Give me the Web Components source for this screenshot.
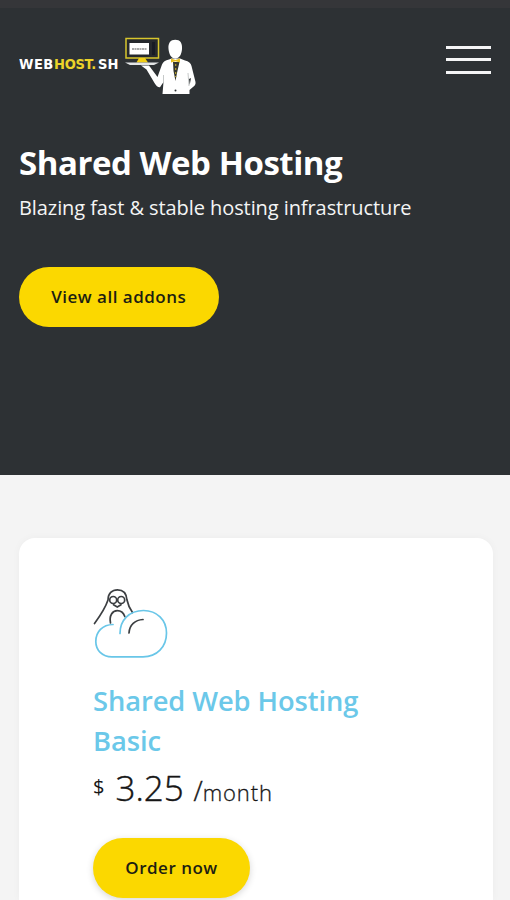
<!DOCTYPE html>
<html lang="en">
<head>
<meta charset="utf-8">
<title>Shared Web Hosting</title>
<style>
    body {
        margin: 0;
        height: 900px;
        overflow: hidden;
        background: #f4f4f4;
        font-family: 'Open Sans', sans-serif;
    }
</style>
</head>
<body>
<host-hero>
    <host-nav slot="nav"></host-nav>
    <span slot="title">Shared Web Hosting</span>
    <span slot="subtitle">Blazing fast &amp; stable hosting infrastructure</span>
    <pill-button slot="action" style="--w: 199.5px">View all addons</pill-button>
</host-hero>
<plan-card>
    <cloud-icon slot="icon"></cloud-icon>
    <span slot="name">Shared Web Hosting Basic</span>
    <plan-price slot="price" currency="$" amount="3.25" period="month"></plan-price>
    <pill-button slot="action" style="--w: 157px; --shadow: 0 2px 7px rgba(0, 0, 0, 0.16)">Order now</pill-button>
</plan-card>

<script>
// attaches an open shadow root with the given markup
class BaseElement extends HTMLElement
{
    constructor()
    {
        super();
        const template = document.createElement('template');
        template.innerHTML = this.constructor.markup;
        this.attachShadow({mode: 'open'}).append(template.content.cloneNode(true));
    }
}

class HostLogo extends BaseElement
{
    static markup = `
<style>
    :host { display: block; width: 178px; height: 60px; }
    svg { display: block; }
    text { font-family: 'DejaVu Sans', sans-serif; font-weight: 700; font-size: 13.1px; letter-spacing: 0.5px; fill: #fff; }
    .accent { fill: #ecd329; letter-spacing: -0.3px; }
    .end { letter-spacing: 0; }
</style>
<svg width="178" height="60" viewBox="19 36 178 60">
    <g transform="translate(0 68.6) scale(1 1.12)">
        <text x="19">WEB</text>
        <text class="accent" x="54">HOST.</text>
        <text class="end" x="98">SH</text>
    </g>
    <!-- monitor -->
    <rect x="126" y="38.5" width="32.5" height="19.5" fill="#25282d" stroke="#d8c62d" stroke-width="1.5"/>
    <rect x="129.5" y="43" width="19.5" height="11.5" fill="#fff"/>
    <path d="M132 49H147" stroke="#555" stroke-width="1.2" stroke-dasharray="2 .5"/>
    <path d="M153.5 42V55" stroke="#171a24" stroke-width="3"/>
    <path d="M139 58H145L148 62.5H136.500Z" fill="#f2ce16"/>
    <path d="M125 62.500H159L154 65H130Z" fill="#e4e6e7"/>
    <!-- waiter -->
    <path d="M168.500 49C168 43 170.500 39.800 175.300 39.800S182.500 43 182 49C181.700 54 179.500 58.500 175.300 58.500S169 54 168.500 49Z" fill="#fff"/>
    <path d="M141 65.500H149L157.500 77L162 64.500Q163.500 60.500 169 59.500L171.500 58.500H180L185 60.500Q190.500 61.500 191.500 66L195.500 82Q196 85 193 87L189.500 90V94H162.500L163.500 82L160 87.200Q157 87.500 154.500 83L146.500 69.500Z" fill="#fff"/>
    <path d="M173 62H179.500L177 73L175.500 81L173.500 71Z" fill="#34362e"/>
    <path d="M171 58.500L175.500 60L180 58.500V62.500L175.500 61.200L171 62.500Z" fill="#e7be20"/>
    <path d="M175.700 64V77" stroke="#b8a12a" stroke-width="1.2" stroke-dasharray="2 2"/>
    <path d="M189 79L191 78L189.700 85Z" fill="#2d3134"/>
    <path d="M163.500 75V83M188 73L189 86" stroke="#aeb1b2" stroke-width=".7"/>
    <circle cx="175.500" cy="90.500" r="1" fill="#2d3134"/>
</svg>`;
}
customElements.define('host-logo', HostLogo);

class MenuToggle extends BaseElement
{
    static markup = `
<style>
    :host { display: flex; flex-direction: column; gap: 9.3px; width: 45px; padding-top: 10px; }
    i { height: 3px; background: #f5f5f6; }
</style>
<i></i><i></i><i></i>`;
}
customElements.define('menu-toggle', MenuToggle);

class HostNav extends BaseElement
{
    static markup = `
<style>
    :host { display: flex; justify-content: space-between; align-items: flex-start; height: 105px; }
</style>
<host-logo></host-logo>
<menu-toggle></menu-toggle>`;
}
customElements.define('host-nav', HostNav);

class PillButton extends BaseElement
{
    static markup = `
<style>
    :host { display: block; }
    button {
        display: block;
        width: var(--w);
        height: 60px;
        padding: 0;
        border: 0;
        border-radius: 30px;
        background: #fbd800;
        color: #1d1e12;
        font: 600 17px/60px 'Open Sans', sans-serif;
        letter-spacing: 0.5px;
        box-shadow: var(--shadow, none);
        white-space: nowrap;
        cursor: pointer;
    }
</style>
<button type="button"><slot></slot></button>`;
}
customElements.define('pill-button', PillButton);

class HostHero extends BaseElement
{
    static markup = `
<style>
    :host {
        display: block;
        box-sizing: border-box;
        height: 474.5px;
        padding: 28px 19px 0;
        border-top: 8px solid #353639;
        background: #2d3134;
        color: #fff;
    }
    h1 { margin: 0; font-size: 33px; line-height: 44px; font-weight: 700; letter-spacing: -0.45px; white-space: nowrap; }
    p { margin: 9px 0 44.500px; font-size: 20px; line-height: 28px; color: #f4f5f5; letter-spacing: -0.08px; white-space: nowrap; }
</style>
<slot name="nav"></slot>
<h1><slot name="title"></slot></h1>
<p><slot name="subtitle"></slot></p>
<slot name="action"></slot>`;
}
customElements.define('host-hero', HostHero);

class CloudIcon extends BaseElement
{
    static markup = `
<style>
    :host { display: block; width: 76px; height: 72px; }
    svg { display: block; fill: none; stroke-linecap: round; stroke-width: 1.7; }
</style>
<svg width="76" height="72" viewBox="93 588 76 72">
    <g stroke="#3c3f42">
        <path d="M94.500 623.500C100 616 105 609 108 600C108 593.500 112 589.800 117.500 589.800S126.500 593.500 127 600C128 605 130 609 132.500 612.500"/>
        <circle cx="113.200" cy="600" r="3.500"/>
        <circle cx="121.200" cy="600" r="3.500"/>
        <path d="M113.500 604.800L117.300 607L121 604.800" />
        <path d="M110.500 623C109 615.500 112.500 610.700 117.300 610.700C121 610.700 123.500 613 124.800 616.500"/>
        <path d="M129 633C129.500 625 135 620 143 619.500"/>
    </g>
    <path stroke="#69c6e8" d="M120 633.500C120 620 129.500 610.500 143.500 610.500C157 610.500 166.500 620 166.500 633C166.500 647 157 656.800 143 656.800H112C102 656.800 95.800 650 95.800 641.500C95.800 631.500 102.500 624.700 113 624.500"/>
</svg>`;
}
customElements.define('cloud-icon', CloudIcon);

class PlanPrice extends BaseElement
{
    static markup = `
<style>
    :host { display: flex; align-items: baseline; height: 50px; line-height: 50px; color: #161616; white-space: nowrap; }
    .currency { position: relative; top: -7px; width: 22.5px; font-size: 20px; }
    .amount { width: 78px; font-size: 35px; font-weight: 300; -webkit-text-stroke: 0.4px; }
    .slash { font-size: 27px; font-weight: 300; -webkit-text-stroke: 0.4px; }
    .period { font-size: 22px; font-weight: 300; letter-spacing: 0.9px; -webkit-text-stroke: 0.3px; }
</style>
<span class="currency"></span><span class="amount"></span><span class="slash">/</span><span class="period"></span>`;

    connectedCallback()
    {
        ['currency', 'amount', 'period'].forEach(name => {
            this.shadowRoot.querySelector('.' + name).textContent = this.getAttribute(name);
        })
    }
}
customElements.define('plan-price', PlanPrice);

class PlanCard extends BaseElement
{
    static markup = `
<style>
    :host {
        display: block;
        box-sizing: border-box;
        height: 362px;
        margin: 63px 17.500px 0 19px;
        padding: 50.500px 74px 0;
        border-radius: 16px 16px 0 0;
        background: #fff;
        box-shadow: 0 0 8px rgba(0, 0, 0, 0.035);
    }
    h2 { margin: 20.500px 0 1px; font-size: 27.3px; line-height: 40.5px; font-weight: 600; letter-spacing: -0.08px; color: #6bc8e9; }
    .action { margin-top: 25.500px; }
</style>
<slot name="icon"></slot>
<h2><slot name="name"></slot></h2>
<slot name="price"></slot>
<div class="action"><slot name="action"></slot></div>`;
}
customElements.define('plan-card', PlanCard);
</script>
</body>
</html>
